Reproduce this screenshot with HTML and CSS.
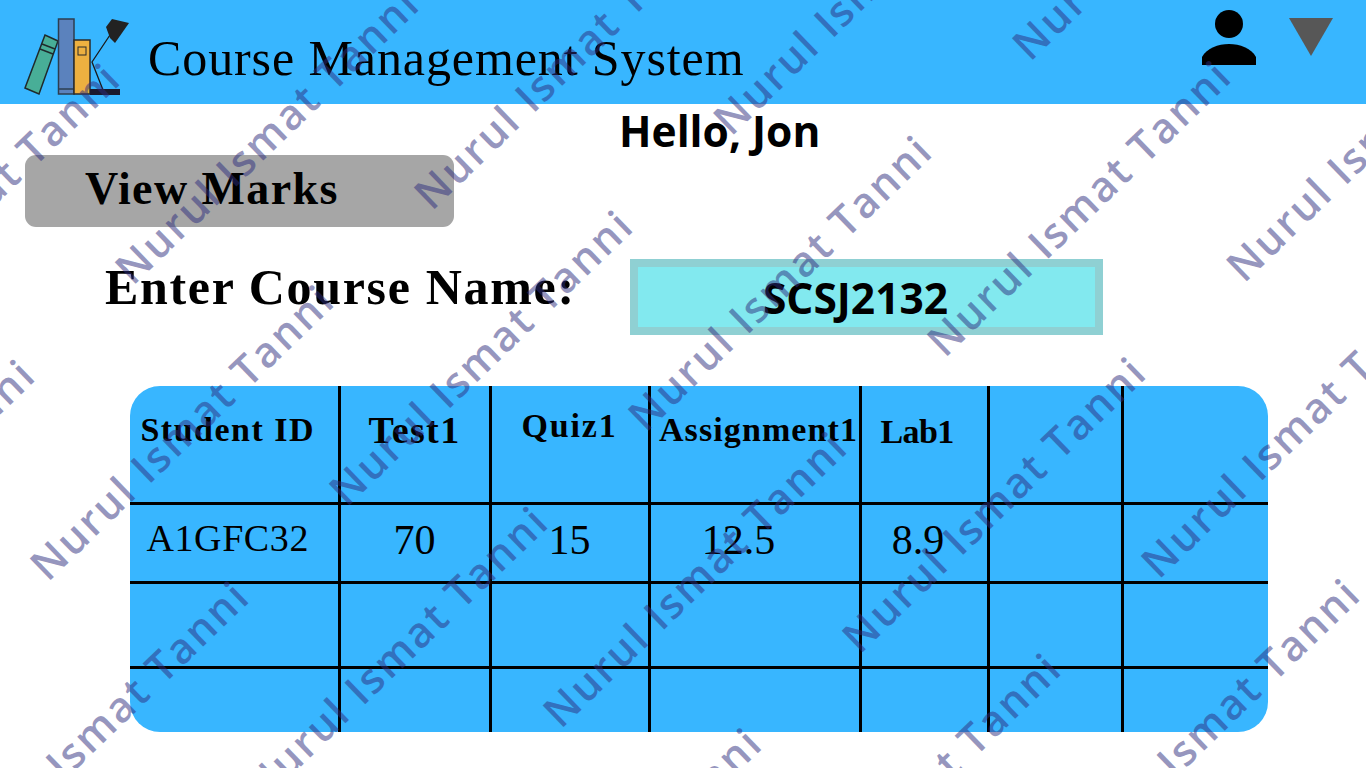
FILE: index.html
```html
<!DOCTYPE html>
<html lang="en">
<head>
    <meta charset="UTF-8">
    <meta name="viewport" content="width=device-width, initial-scale=1.0">
    <title>Course Management System</title>
    <link rel="stylesheet" href="styles.css">
</head>

<body>
    <header class="top-bar">
        <svg class="logo" width="110" height="84" viewBox="20 14 110 84" aria-label="Books and lamp">
            <polygon points="25,88 45,35 58,41 39,94" fill="#48ae97" stroke="#1f2a2c" stroke-width="1.5"/>
            <line x1="42" y1="44" x2="55" y2="49" stroke="#1f2a2c" stroke-width="1.5"/>
            <line x1="40" y1="49" x2="53" y2="54" stroke="#1f2a2c" stroke-width="1.5"/>
            <rect x="58.5" y="19" width="15.5" height="75" fill="#5b82bd" stroke="#2c3e50" stroke-width="1.5"/>
            <line x1="59" y1="89" x2="74" y2="89" stroke="#2c3e50" stroke-width="1.5"/>
            <rect x="74" y="40" width="16" height="54" fill="#edb040" stroke="#2b2b2b" stroke-width="1.5"/>
            <rect x="78" y="47" width="8" height="8" fill="none" stroke="#2b2b2b" stroke-width="1"/>
            <rect x="90" y="89" width="30" height="6" fill="#1a1a2e"/>
            <polyline points="112,32 92,62 103,90" fill="none" stroke="#1a1a1a" stroke-width="1.3"/>
            <polygon points="106,27 112,19 129,23 115,43 110,38" fill="#222"/>
        </svg>
        <h1 class="app-title">Course Management System</h1>
        <svg class="user-icon" width="56" height="56" viewBox="0 0 56 56" aria-label="User">
            <circle cx="28" cy="14" r="14"/>
            <path d="M1 55 V47 C6 38 17 34 28 34 C39 34 50 38 55 47 V55 Z"/>
        </svg>
        <svg class="menu-arrow" width="44" height="38" viewBox="0 0 44 38" aria-label="Open menu">
            <polygon points="0,0 44,0 22,38" fill="#575757"/>
        </svg>
    </header>

    <main class="content">
        <p class="hello">Hello, Jon</p>
        <button class="view-marks" type="button">View Marks</button>

        <div class="course-row">
            <label class="course-label" for="course">Enter Course Name:</label>
            <input class="course-input" id="course" type="text" value="SCSJ2132">
        </div>

        <div class="marks-card">
            <table class="marks-table">
                <colgroup>
                    <col class="col-id"><col class="col-test"><col class="col-quiz"><col class="col-assign">
                    <col class="col-lab"><col class="col-x"><col class="col-y">
                </colgroup>
                <thead>
                    <tr class="row-head">
                        <th class="id-head">Student ID</th>
                        <th class="test-head">Test1</th>
                        <th class="quiz-head">Quiz1</th>
                        <th class="assign-head">Assignment1</th>
                        <th class="lab-head">Lab1</th>
                        <th></th>
                        <th></th>
                    </tr>
                </thead>
                <tbody>
                    <tr class="row-data">
                        <td class="id-cell">A1GFC32</td>
                        <td>70</td>
                        <td>15</td>
                        <td class="assign-cell">12.5</td>
                        <td class="lab-cell">8.9</td>
                        <td></td>
                        <td></td>
                    </tr>
                    <tr class="row-empty"><td></td><td></td><td></td><td></td><td></td><td></td><td></td></tr>
                    <tr class="row-last"><td></td><td></td><td></td><td></td><td></td><td></td><td></td></tr>
                </tbody>
            </table>
        </div>
    </main>

    <div class="watermark" aria-hidden="true">
        <div class="wm-row"><span>Nurul Ismat Tanni</span><span>Nurul Ismat Tanni</span><span>Nurul Ismat Tanni</span><span>Nurul Ismat Tanni</span><span>Nurul Ismat Tanni</span></div>
        <div class="wm-row"><span>Nurul Ismat Tanni</span><span>Nurul Ismat Tanni</span><span>Nurul Ismat Tanni</span><span>Nurul Ismat Tanni</span><span>Nurul Ismat Tanni</span></div>
        <div class="wm-row"><span>Nurul Ismat Tanni</span><span>Nurul Ismat Tanni</span><span>Nurul Ismat Tanni</span><span>Nurul Ismat Tanni</span><span>Nurul Ismat Tanni</span></div>
        <div class="wm-row"><span>Nurul Ismat Tanni</span><span>Nurul Ismat Tanni</span><span>Nurul Ismat Tanni</span><span>Nurul Ismat Tanni</span><span>Nurul Ismat Tanni</span></div>
        <div class="wm-row"><span>Nurul Ismat Tanni</span><span>Nurul Ismat Tanni</span><span>Nurul Ismat Tanni</span><span>Nurul Ismat Tanni</span><span>Nurul Ismat Tanni</span></div>
        <div class="wm-row"><span>Nurul Ismat Tanni</span><span>Nurul Ismat Tanni</span><span>Nurul Ismat Tanni</span><span>Nurul Ismat Tanni</span><span>Nurul Ismat Tanni</span></div>
        <div class="wm-row"><span>Nurul Ismat Tanni</span><span>Nurul Ismat Tanni</span><span>Nurul Ismat Tanni</span><span>Nurul Ismat Tanni</span><span>Nurul Ismat Tanni</span></div>
        <div class="wm-row"><span>Nurul Ismat Tanni</span><span>Nurul Ismat Tanni</span><span>Nurul Ismat Tanni</span><span>Nurul Ismat Tanni</span><span>Nurul Ismat Tanni</span></div>
        <div class="wm-row"><span>Nurul Ismat Tanni</span><span>Nurul Ismat Tanni</span><span>Nurul Ismat Tanni</span><span>Nurul Ismat Tanni</span><span>Nurul Ismat Tanni</span></div>
        <div class="wm-row"><span>Nurul Ismat Tanni</span><span>Nurul Ismat Tanni</span><span>Nurul Ismat Tanni</span><span>Nurul Ismat Tanni</span><span>Nurul Ismat Tanni</span></div>
        <div class="wm-row"><span>Nurul Ismat Tanni</span><span>Nurul Ismat Tanni</span><span>Nurul Ismat Tanni</span><span>Nurul Ismat Tanni</span><span>Nurul Ismat Tanni</span></div>
    </div>
</body>

</html>
```

FILE: styles.css
```css
/* Basic reset */
* {
    margin: 0;
    padding: 0;
    box-sizing: border-box;
}

body {
    position: relative;
    width: 1366px;
    height: 768px;
    overflow: hidden;
    background-color: #ffffff;
    color: #000000;
    font-family: "Liberation Serif", serif;
}

.top-bar {
    display: flex;
    align-items: flex-start;
    height: 104px;
    background-color: #38b6ff;
}

.logo {
    margin: 14px 0 0 20px;
    flex: none;
}

.app-title {
    margin: 30px 0 0 18px;
    font-size: 50px;
    line-height: 56px;
    font-weight: normal;
    letter-spacing: 0.9px;
    white-space: nowrap;
}

.user-icon {
    margin: 10px 0 0 auto;
    flex: none;
}

.menu-arrow {
    margin: 18px 33px 0 32px;
    flex: none;
}

.hello {
    margin-left: 619px;
    height: 51px;
    font-family: "Open Sans", sans-serif;
    font-size: 42.5px;
    font-weight: 700;
    line-height: 54px;
}

.view-marks {
    display: block;
    width: 429px;
    height: 72px;
    margin-left: 25px;
    padding: 0 0 6px 60px;
    border: none;
    border-radius: 11px;
    background-color: #a6a6a6;
    font-family: "Liberation Serif", serif;
    font-size: 46px;
    font-weight: 700;
    letter-spacing: 1.4px;
    text-align: left;
}

.course-row {
    display: flex;
    align-items: flex-start;
    margin-top: 32px;
    padding-left: 105px;
}

.course-label {
    width: 525px;
    font-size: 50px;
    font-weight: 700;
    line-height: 56px;
    letter-spacing: 1.67px;
    white-space: nowrap;
}

.course-input {
    width: 473px;
    height: 76px;
    padding-right: 22px;
    border: 8px solid #8fd0d3;
    background-color: #82e9ef;
    font-family: "Open Sans", sans-serif;
    font-size: 42.5px;
    font-weight: 700;
    color: #000000;
    text-align: center;
    outline: none;
}

.marks-card {
    width: 1138px;
    height: 346px;
    margin: 51px 0 0 130px;
    border-radius: 30px;
    overflow: hidden;
    background-color: #38b6ff;
}

.marks-table {
    width: 100%;
    height: 100%;
    border-collapse: collapse;
    table-layout: fixed;
}

.col-id { width: 209px; }
.col-test { width: 151px; }
.col-quiz { width: 159px; }
.col-assign { width: 211px; }
.col-lab { width: 128px; }
.col-x { width: 134px; }

.marks-table th,
.marks-table td {
    border: 3px solid #000000;
    text-align: center;
    vertical-align: top;
}

.marks-table tr > :first-child { border-left: none; }
.marks-table tr > :last-child { border-right: none; }
.marks-table thead th { border-top: none; }
.row-last td { border-bottom: none; }

.row-head { height: 117px; }
.row-data { height: 79px; }
.row-empty { height: 85px; }
.row-last { height: 65px; }

.marks-table th {
    padding-top: 24px;
    font-size: 34px;
    font-weight: 700;
    line-height: 40px;
    white-space: nowrap;
}

.marks-table .id-head { padding-right: 12px; letter-spacing: 1.5px; }
.marks-table .test-head { font-size: 38px; letter-spacing: 1.4px; }
.marks-table .quiz-head { padding-top: 20px; letter-spacing: 1.8px; }
.marks-table .assign-head { padding-left: 8px; letter-spacing: 1.1px; }
.marks-table .lab-head { padding: 26px 14px 0 0; letter-spacing: -0.6px; }

.marks-table td {
    padding-top: 10px;
    font-size: 42px;
    line-height: 50px;
}

.marks-table .id-cell { padding: 8px 12px 0 0; font-size: 38px; letter-spacing: 0.6px; }
.marks-table .assign-cell { padding-right: 32px; }
.marks-table .lab-cell { padding-right: 12px; }

/* Diagonal stamp laid over the whole page */
.watermark {
    position: absolute;
    left: -914px;
    top: 740px;
    width: 2700px;
    transform: rotate(-44deg);
    transform-origin: 0 0;
    pointer-events: none;
    color: rgba(45, 45, 125, 0.5);
    font-family: "Open Sans", sans-serif;
    font-size: 42px;
    font-weight: 600;
    letter-spacing: 2.2px;
    line-height: 154px;
    white-space: nowrap;
}

.wm-row {
    display: flex;
}

.wm-row:nth-child(even) {
    margin-left: 267px;
}

.wm-row span {
    flex: none;
    width: 534px;
}
```
